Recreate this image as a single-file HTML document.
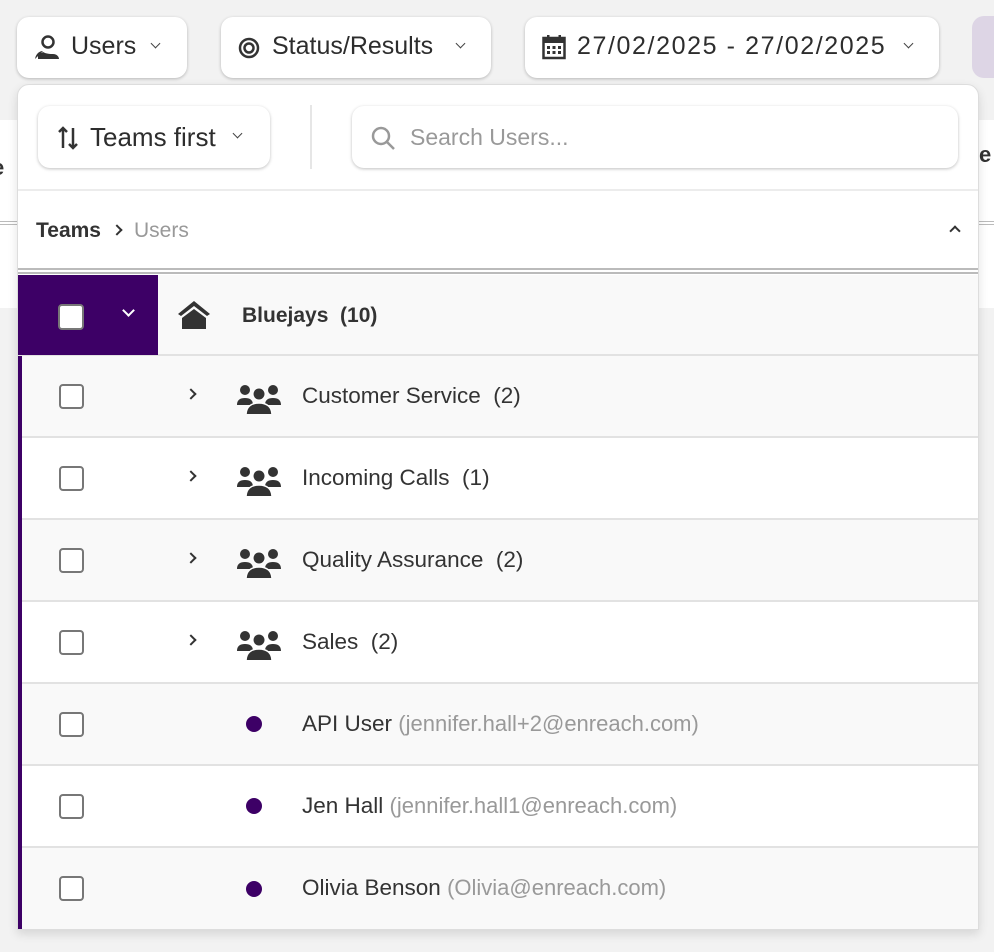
<!DOCTYPE html>
<html><head><style>
*{box-sizing:border-box;margin:0;padding:0}
body{width:994px;height:952px;background:#f2f2f2;font-family:"Liberation Sans",sans-serif;color:#333;position:relative;overflow:hidden}
.abs{position:absolute}
.btn{position:absolute;background:#fff;border-radius:12px;box-shadow:0 1px 3px rgba(0,0,0,.25);display:flex;align-items:center;font-size:25px;color:#2d2d2d}
.chev{display:inline-block;width:7px;height:7px;border-right:1.5px solid #444;border-bottom:1.5px solid #444;transform:rotate(45deg);margin-top:-5px}
.row{position:absolute;left:22px;width:956px;height:82px;border-bottom:2px solid #e2e2e2;display:flex;align-items:center;font-size:22.5px;color:#333}
.cb{position:absolute;left:37px;width:25px;height:25px;border:2px solid #777;border-radius:4px;background:#fff}
.rc{position:absolute;left:165px;width:8px;height:8px;border-right:2px solid #333;border-top:2px solid #333;transform:rotate(45deg);margin-top:-4px}
.grp{position:absolute;left:215px}
.lbl{position:absolute;left:280px;top:27px}
.dot{position:absolute;left:224px;width:16px;height:16px;border-radius:50%;background:#3d0066}
.em{color:#999;font-size:22px}
</style></head><body>
<div class="abs" style="left:0;top:120px;width:18px;height:188px;background:#fff"></div>
<div class="abs" style="top:155px;font-size:22px;font-weight:bold;color:#333;left:-8px">e</div>
<div class="abs" style="left:0;top:221px;width:18px;height:4px;border-top:1px solid #bbb;border-bottom:1px solid #bbb"></div>
<div class="abs" style="left:978px;top:120px;width:16px;height:188px;background:#fff"></div>
<div class="abs" style="left:979px;top:142px;font-size:22px;font-weight:bold;color:#333">e</div>
<div class="abs" style="left:978px;top:221px;width:16px;height:4px;border-top:1px solid #bbb;border-bottom:1px solid #bbb"></div>

<div class="btn" style="left:17px;top:17px;width:170px;height:61px">
 <svg class="abs" style="left:17px;top:17px" width="26" height="26" viewBox="0 0 26 26"><circle cx="14" cy="8" r="5.5" fill="none" stroke="#333" stroke-width="2.5"/><path d="M1 25c1-6 5-8 8-8M4 20c2-1 4-1 5-2 2 1 4 2 10 2 4 0 6 3 6 5H4z" fill="#333"/></svg>
 <span class="abs" style="left:54px;top:15px">Users</span><span class="chev abs" style="left:135px;top:28px"></span></div>
<div class="btn" style="left:221px;top:17px;width:270px;height:61px">
 <svg class="abs" style="left:17px;top:20px" width="22" height="22"><circle cx="11" cy="11" r="9" fill="none" stroke="#333" stroke-width="2.5"/><circle cx="11" cy="11" r="4.5" fill="none" stroke="#333" stroke-width="2.5"/></svg>
 <span class="abs" style="left:51px;top:15px">Status/Results</span><span class="chev abs" style="left:236px;top:28px"></span></div>
<div class="btn" style="left:525px;top:17px;width:414px;height:61px">
 <svg class="abs" style="left:17px;top:17px" width="24" height="26" viewBox="0 0 24 26"><rect x="1.5" y="4" width="21" height="20" fill="none" stroke="#333" stroke-width="2.5"/><rect x="1.5" y="4" width="21" height="5" fill="#333"/><rect x="5" y="1" width="2.5" height="5" fill="#333"/><rect x="16.5" y="1" width="2.5" height="5" fill="#333"/><g fill="#333"><rect x="5" y="12" width="3" height="3"/><rect x="10.5" y="12" width="3" height="3"/><rect x="16" y="12" width="3" height="3"/><rect x="5" y="17" width="3" height="3"/><rect x="10.5" y="17" width="3" height="3"/><rect x="16" y="17" width="3" height="3"/></g></svg>
 <span class="abs" style="left:52px;top:15px;letter-spacing:1.6px">27/02/2025 - 27/02/2025</span><span class="chev abs" style="left:380px;top:28px"></span></div>
<div class="abs" style="left:972px;top:16px;width:40px;height:62px;background:#ddd5e5;border-radius:12px"></div>

<div class="abs" style="left:17px;top:84px;width:962px;height:846px;background:#fff;border:1px solid #ddd;border-radius:12px 12px 0 0;box-shadow:0 4px 10px rgba(0,0,0,.12)"></div>
<div class="btn" style="left:38px;top:106px;width:232px;height:62px;font-size:26px">
 <svg class="abs" style="left:20px;top:20px" width="20" height="24" viewBox="0 0 20 24"><path d="M5 22V2M1 6l4-4 4 4M15 2v20M11 18l4 4 4-4" fill="none" stroke="#333" stroke-width="2.5"/></svg>
 <span class="abs" style="left:52px;top:16px">Teams first</span><span class="chev abs" style="left:196px;top:29px"></span></div>
<div class="abs" style="left:310px;top:105px;width:2px;height:64px;background:#e6e6e6"></div>
<div class="btn" style="left:352px;top:106px;width:606px;height:62px;color:#999;font-size:23px">
 <svg class="abs" style="left:19px;top:20px" width="26" height="26"><circle cx="10" cy="10" r="8" fill="none" stroke="#999" stroke-width="2.5"/><path d="M16 16l7 7" stroke="#999" stroke-width="2.5"/></svg>
 <span class="abs" style="left:58px;top:18px">Search Users...</span></div>
<div class="abs" style="left:18px;top:189px;width:960px;height:2px;background:#ececec"></div>
<div class="abs" style="left:36px;top:219px;font-size:21px;font-weight:bold;color:#333">Teams</div>
<div class="abs" style="left:113px;top:226px;width:8px;height:8px;border-right:2px solid #333;border-top:2px solid #333;transform:rotate(45deg)"></div>
<div class="abs" style="left:134px;top:219px;font-size:21px;color:#999">Users</div>
<div class="abs" style="left:951px;top:227px;width:8px;height:8px;border-left:2.5px solid #333;border-top:2.5px solid #333;transform:rotate(45deg)"></div>
<div class="abs" style="left:18px;top:268px;width:960px;height:6px;border-top:2px solid #bbb;border-bottom:2px solid #bbb"></div>

<div class="abs" style="left:18px;top:275px;width:960px;height:81px;background:#f9f9f9;border-bottom:2px solid #e2e2e2"></div>
<div class="abs" style="left:18px;top:275px;width:140px;height:80px;background:#3d0066"></div>
<div class="abs" style="left:58px;top:304px;width:26px;height:26px;background:#fff;border:2px solid #777;border-radius:4px"></div>
<div class="abs" style="left:124px;top:306px;width:9px;height:9px;border-right:2px solid #fff;border-bottom:2px solid #fff;transform:rotate(45deg)"></div>
<svg class="abs" style="left:177px;top:300px" width="34" height="30" viewBox="0 0 34 30"><path d="M17 1L1 14l3 2 13-10 13 10 3-2z" fill="#333"/><path d="M5 18l12-9 12 9v11H5z" fill="#333"/></svg>
<div class="abs" style="left:242px;top:304px;font-size:21px;font-weight:bold;color:#333">Bluejays&nbsp; (10)</div>
<div class="abs" style="left:18px;top:356px;width:4px;height:573px;background:#3d0066"></div>

<svg width="0" height="0" style="position:absolute"><defs><g id="g"><circle cx="8" cy="6" r="5" fill="#333"/><circle cx="36" cy="6" r="5" fill="#333"/><path d="M0 21c0-5 3-7 8-7s8 2 8 7zM28 21c0-5 3-7 8-7s8 2 8 7z" fill="#333"/><circle cx="22" cy="10" r="6.5" fill="#fff"/><circle cx="22" cy="10" r="5.5" fill="#333"/><path d="M9 31c0-8 5-12 13-12s13 4 13 12z" fill="#333" stroke="#fff" stroke-width="1.5"/></g></defs></svg>

<div class="row" style="top:356px;background:#f9f9f9"><div class="cb"></div><div class="rc"></div><svg class="grp" width="44" height="30" style="top:28px"><use href="#g"/></svg><span class="lbl">Customer Service&nbsp; (2)</span></div>
<div class="row" style="top:438px;background:#fff"><div class="cb"></div><div class="rc"></div><svg class="grp" width="44" height="30" style="top:28px"><use href="#g"/></svg><span class="lbl">Incoming Calls&nbsp; (1)</span></div>
<div class="row" style="top:520px;background:#f9f9f9"><div class="cb"></div><div class="rc"></div><svg class="grp" width="44" height="30" style="top:28px"><use href="#g"/></svg><span class="lbl">Quality Assurance&nbsp; (2)</span></div>
<div class="row" style="top:602px;background:#fff"><div class="cb"></div><div class="rc"></div><svg class="grp" width="44" height="30" style="top:28px"><use href="#g"/></svg><span class="lbl">Sales&nbsp; (2)</span></div>
<div class="row" style="top:684px;background:#f9f9f9"><div class="cb"></div><div class="dot"></div><span class="lbl">API User <span class="em">(jennifer.hall+2@enreach.com)</span></span></div>
<div class="row" style="top:766px;background:#fff"><div class="cb"></div><div class="dot"></div><span class="lbl">Jen Hall <span class="em">(jennifer.hall1@enreach.com)</span></span></div>
<div class="row" style="top:848px;background:#f9f9f9;height:81px;border:none"><div class="cb"></div><div class="dot"></div><span class="lbl">Olivia Benson <span class="em">(Olivia@enreach.com)</span></span></div>
</body></html>
